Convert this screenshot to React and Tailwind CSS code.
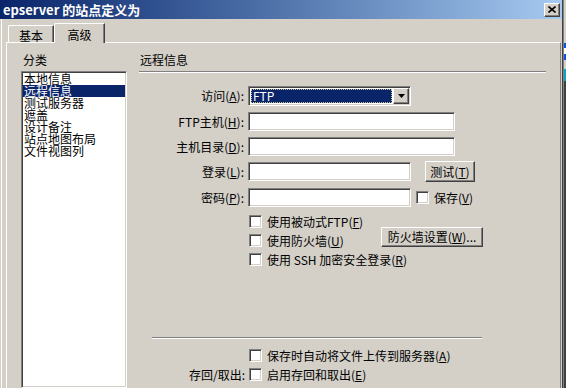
import React from 'react';

const sunken =
  'border border-t-[#808080] border-l-[#808080] border-b-white border-r-white shadow-[inset_1px_1px_0_#404040,inset_-1px_-1px_0_#d4d0c8]';
const raised =
  'border border-t-white border-l-white border-b-[#404040] border-r-[#404040] shadow-[inset_-1px_-1px_0_#808080]';

const categories = ['本地信息', '远程信息', '测试服务器', '遮盖', '设计备注', '站点地图布局', '文件视图列'];

function Key({ k }) {
  return (
    <>
      (<span className="underline">{k}</span>)
    </>
  );
}

function Label({ text, k }) {
  return (
    <span className="w-[108px] shrink-0 whitespace-nowrap pr-[3px] text-right leading-[12px]">
      {text}
      <Key k={k} />:
    </span>
  );
}

function Box() {
  return <span className={`${sunken} block h-[13px] w-[13px] shrink-0 bg-white`} />;
}

function Input({ w }) {
  return <div className={`${sunken} h-[19px] shrink-0 bg-white ${w}`} />;
}

function Check({ text, k, className = '' }) {
  return (
    <div className={`flex items-start pl-[110px] ${className}`}>
      <Box />
      <span className="ml-[5px] whitespace-nowrap leading-[13px]">
        {text}
        <Key k={k} />
      </span>
    </div>
  );
}

export default function App() {
  return (
    <div className="flex h-[388px] w-[566px] overflow-hidden bg-[#d4d0c8] font-['Noto_Sans_CJK_SC',sans-serif] text-[12px] text-black">
      <div className="flex w-[563px] shrink-0 flex-col border-r border-r-[#404040]">
        {/* title bar */}
        <div className="flex h-[19px] shrink-0 items-center justify-between bg-linear-to-r from-[#0a246a] to-[#a6caf0] pl-[3px] pr-[2px]">
          <span className="text-[13px] font-bold leading-none text-white">epserver 的站点定义为</span>
          <div className={`${raised} flex h-[14px] w-[16px] items-center justify-center bg-[#d4d0c8]`}>
            <svg width="8" height="7" viewBox="0 0 8 7">
              <path d="M0.5 0.5 L7.5 6.5 M7.5 0.5 L0.5 6.5" stroke="#000" strokeWidth="1.6" />
            </svg>
          </div>
        </div>

        <div className="flex flex-1 flex-col pl-px">
          <div className="flex flex-1 flex-col border-l border-l-white">
            {/* tabs */}
            <div className="flex h-[23px] shrink-0 items-end pl-[6px]">
              <div className="flex h-[17px] w-[46px] items-start justify-center rounded-tl-[2px] border-l border-t border-l-white border-t-white border-r border-r-[#404040] pt-px shadow-[inset_-1px_0_0_#808080]">
                基本
              </div>
              <div className="relative z-10 -mb-px flex h-[20px] w-[51px] items-start justify-center rounded-tl-[2px] border-l border-t border-l-white border-t-white border-r border-r-[#404040] bg-[#d4d0c8] pt-[2px] shadow-[inset_-1px_0_0_#808080]">
                高级
              </div>
            </div>

            {/* panel */}
            <div className="ml-[4px] mr-px flex flex-1 border-l border-t border-l-white border-t-white border-r border-r-[#808080]">
              {/* categories */}
              <div className="ml-[14px] flex w-[106px] shrink-0 flex-col pt-[11px]">
                <div className="pl-[2px] leading-[12px]">分类</div>
                <div className={`${sunken} mt-[5px] flex-1 bg-white p-px`}>
                  {categories.map((c, i) => (
                    <div
                      key={c}
                      className={i === 1 ? 'bg-[#0a246a] pl-px leading-[12px] text-white' : 'pl-px leading-[12px]'}
                    >
                      {c}
                    </div>
                  ))}
                </div>
              </div>

              {/* remote info */}
              <div className="ml-[12px] flex w-[407px] flex-col pt-[11px]">
                <div className="pl-px leading-[12px]">远程信息</div>
                <div className="mt-[5px] h-[2px] border-b border-t border-b-white border-t-[#808080]" />

                <div className="mt-[13px] flex h-[20px] items-center">
                  <Label text="访问" k="A" />
                  <div className={`${sunken} ml-px flex h-[20px] w-[163px] items-center bg-white p-px`}>
                    <div className="ml-px mr-px flex h-[14px] flex-1 items-center border border-dotted border-[#c8c890] bg-[#0a246a] pl-px leading-none text-white">
                      FTP
                    </div>
                    <div className={`${raised} flex h-[16px] w-[16px] items-center justify-center bg-[#d4d0c8]`}>
                      <svg width="7" height="4" viewBox="0 0 7 4">
                        <path d="M0 0 H7 L3.5 4 Z" fill="#000" />
                      </svg>
                    </div>
                  </div>
                </div>

                <div className="mt-[6px] flex items-center">
                  <Label text="FTP主机" k="H" />
                  <span className="ml-px"><Input w="w-[207px]" /></span>
                </div>
                <div className="mt-[6px] flex items-center">
                  <Label text="主机目录" k="D" />
                  <span className="ml-px"><Input w="w-[207px]" /></span>
                </div>
                <div className="mt-[5px] flex h-[21px] items-center">
                  <Label text="登录" k="L" />
                  <span className="ml-px"><Input w="w-[163px]" /></span>
                  <div className={`${raised} ml-[14px] flex h-[21px] w-[50px] items-center justify-center leading-none`}>
                    测试<Key k="T" />
                  </div>
                </div>
                <div className="mt-[6px] flex items-center">
                  <Label text="密码" k="P" />
                  <span className="ml-px"><Input w="w-[163px]" /></span>
                  <span className="ml-[5px]">
                    <Box />
                  </span>
                  <span className="ml-[5px] leading-none">
                    保存<Key k="V" />
                  </span>
                </div>

                <Check className="mt-[8px]" text="使用被动式FTP" k="F" />
                <div className="mt-[6px] flex items-start pl-[110px]">
                  <Box />
                  <span className="ml-[5px] w-[114px] whitespace-nowrap leading-[13px]">
                    使用防火墙<Key k="U" />
                  </span>
                  <div className={`${raised} -mt-[7px] flex h-[20px] w-[102px] items-center justify-center whitespace-nowrap leading-none`}>
                    防火墙设置<Key k="W" />...
                  </div>
                </div>
                <Check className="mt-[6px]" text="使用 SSH 加密安全登录" k="R" />

                <div className="ml-[13px] mt-[71px] h-[2px] w-[330px] border-b border-t border-b-white border-t-[#808080]" />
                <Check className="mt-[10px]" text="保存时自动将文件上传到服务器" k="A" />
                <div className="mt-[6px] flex items-start">
                  <span className="w-[110px] shrink-0 whitespace-nowrap pr-[4px] text-right leading-[13px]">存回/取出:</span>
                  <Box />
                  <span className="ml-[5px] whitespace-nowrap leading-[13px]">
                    启用存回和取出<Key k="E" />
                  </span>
                </div>
              </div>
            </div>
          </div>
        </div>
      </div>

      {/* edge of the window behind */}
      <div className="flex w-[3px] shrink-0 flex-col border-l border-l-[#808080]">
        <div className="h-[43px] bg-[#d4d0c8]" />
        <div className="h-[5px] bg-[#1050e0]" />
        <div className="h-[6px] bg-white" />
        <div className="h-[6px] bg-[#1050e0]" />
        <div className="h-[9px] bg-[#d4d0c8]" />
        <div className="h-[12px] bg-[#10a0c8]" />
        <div className="flex-1 bg-[#404040]" />
      </div>
    </div>
  );
}
